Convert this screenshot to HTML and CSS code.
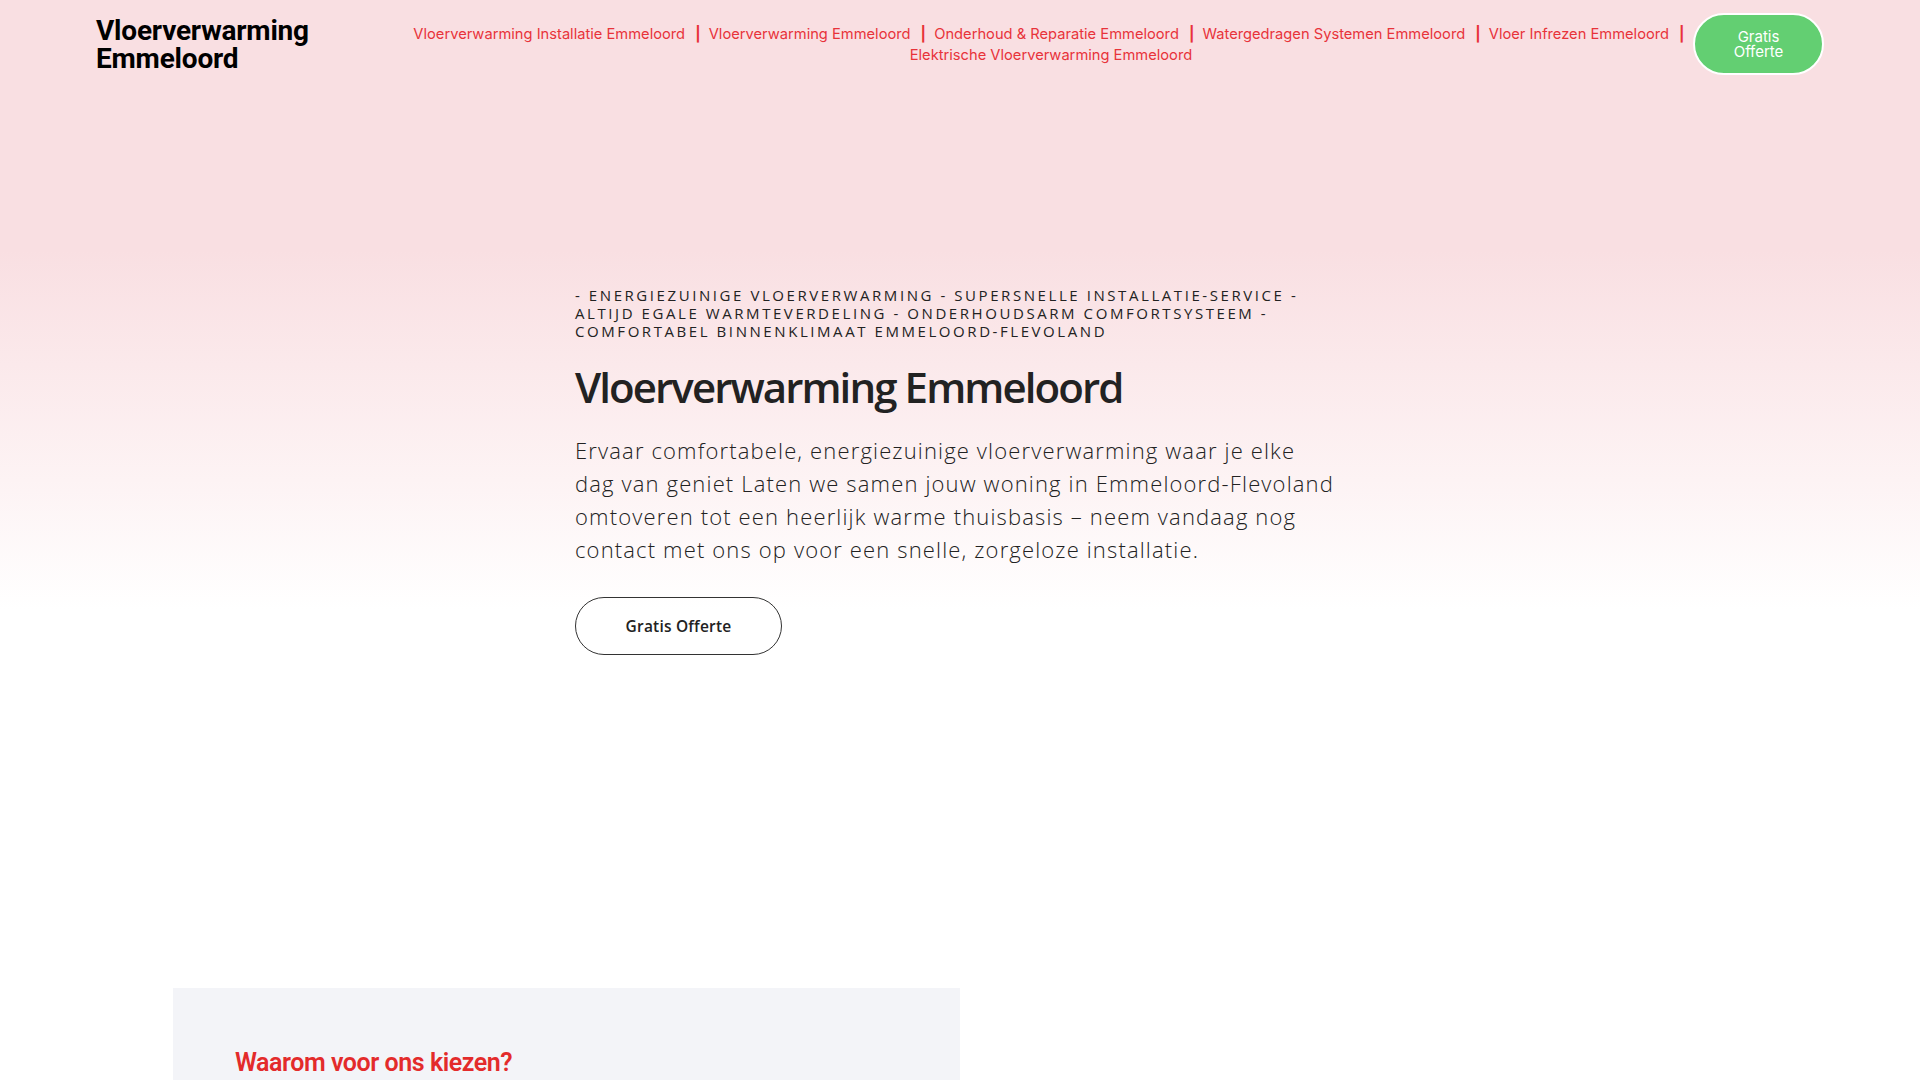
FILE: index.html
```html
<!DOCTYPE html>
<html lang="nl">
<head>
<meta charset="utf-8">
<title>Vloerverwarming Emmeloord</title>
<link rel="stylesheet" href="styles.css">
</head>
<body>
<div class="page">
  <header class="site-header">
    <a class="logo" href="#">Vloerverwarming<br>Emmeloord</a>
    <nav class="main-nav">
      <a href="#">Vloerverwarming Installatie Emmeloord</a><span class="sep">|</span>
      <a href="#">Vloerverwarming Emmeloord</a><span class="sep">|</span>
      <a href="#">Onderhoud &amp; Reparatie Emmeloord</a><span class="sep">|</span>
      <a href="#">Watergedragen Systemen Emmeloord</a><span class="sep">|</span>
      <a href="#">Vloer Infrezen Emmeloord</a><span class="sep">|</span>
      <a href="#">Elektrische Vloerverwarming Emmeloord</a>
    </nav>
    <a class="cta" href="#">Gratis<br>Offerte</a>
  </header>

  <section class="hero">
    <div class="hero-inner">
      <p class="tagline">- Energiezuinige vloerverwarming - Supersnelle installatie-service - Altijd egale warmteverdeling - Onderhoudsarm comfortsysteem - Comfortabel binnenklimaat Emmeloord-Flevoland</p>
      <h1 class="hero-title">Vloerverwarming Emmeloord</h1>
      <p class="hero-lead">Ervaar comfortabele, energiezuinige vloerverwarming waar je elke dag&nbsp;van geniet Laten we samen jouw woning in Emmeloord-Flevoland omtoveren tot een heerlijk warme thuisbasis – neem vandaag nog contact met ons op voor een snelle, zorgeloze installatie.</p>
      <a class="btn-outline" href="#">Gratis Offerte</a>
    </div>
  </section>

  <section class="why">
    <div class="why-grid">
      <div class="why-card">
        <h2 class="why-title">Waarom voor ons kiezen?</h2>
      </div>
      <div class="why-side"></div>
    </div>
  </section>
</div>
</body>
</html>
```

FILE: styles.css
```css
* { box-sizing: border-box; }
html, body { margin: 0; padding: 0; }
body {
  font-family: "Open Sans", "Liberation Sans", sans-serif;
  color: #222;
  background: #fff;
  overflow: hidden;
}
a { text-decoration: none; }

.page {
  min-height: 1080px;
  background: linear-gradient(180deg, #f9dfe2 0px, #f9dfe2 250px, #fdf3f4 480px, #ffffff 610px, #ffffff 100%);
}

.site-header {
  height: 88px;
  padding: 0 96px;
  display: flex;
  align-items: center;
}

.logo {
  font-family: Roboto, "Liberation Sans", sans-serif;
  font-weight: 700;
  font-size: 28px;
  line-height: 28px;
  color: #000;
  letter-spacing: -0.2px;
  flex: 0 0 auto;
  margin-top: 2px;
}

.main-nav {
  flex: 1 1 auto;
  text-align: center;
  padding: 0 0 0 100px;
  font-family: Inter, Roboto, sans-serif;
  font-size: 14.7px;
  line-height: 21px;
  margin-top: 1px;
}
.main-nav a { color: #e8333a; white-space: nowrap; }
.main-nav .sep {
  color: #e8333a;
  font-weight: 700;
  margin: 0 4px 0 10px;
}

.cta {
  flex: 0 0 auto;
  width: 131px;
  height: 62px;
  border-radius: 31px;
  border: 2px solid #ffffff;
  background: #63cf72;
  color: #fff;
  font-family: Inter, Roboto, sans-serif;
  font-size: 15px;
  line-height: 15px;
  display: flex;
  align-items: center;
  justify-content: center;
  text-align: center;
}

.hero {
  padding: 198px 0 333px;
}
.hero-inner {
  width: 770px;
  margin: 0 auto;
}
.tagline {
  margin: 0;
  text-transform: uppercase;
  font-size: 15px;
  line-height: 18px;
  letter-spacing: 2.57px;
  color: #222;
  font-weight: 400;
}
.hero-title {
  margin: 22px 0 0;
  font-size: 42px;
  line-height: 50px;
  font-weight: 600;
  letter-spacing: -1.9px;
  color: #222;
}
.hero-lead {
  margin: 22px 0 0;
  font-size: 22px;
  line-height: 33px;
  font-weight: 300;
  letter-spacing: 1.15px;
  color: #222;
}
.btn-outline {
  margin-top: 31px;
  display: inline-flex;
  align-items: center;
  justify-content: center;
  width: 207px;
  height: 58px;
  border: 1px solid #333;
  border-radius: 29px;
  color: #222;
  font-size: 15.5px;
  font-weight: 600;
  letter-spacing: 0.2px;
}

.why-grid {
  width: 1574px;
  margin: 0 auto;
  display: grid;
  grid-template-columns: 787px 787px;
}
.why-card {
  background: #f3f4f8;
  padding: 60px 62px 60px;
  min-height: 200px;
}
.why-title {
  margin: 0;
  font-family: Roboto, "Liberation Sans", sans-serif;
  font-weight: 600;
  font-size: 25px;
  line-height: 30px;
  color: #e32b2b;
  letter-spacing: -0.45px;
}
```
